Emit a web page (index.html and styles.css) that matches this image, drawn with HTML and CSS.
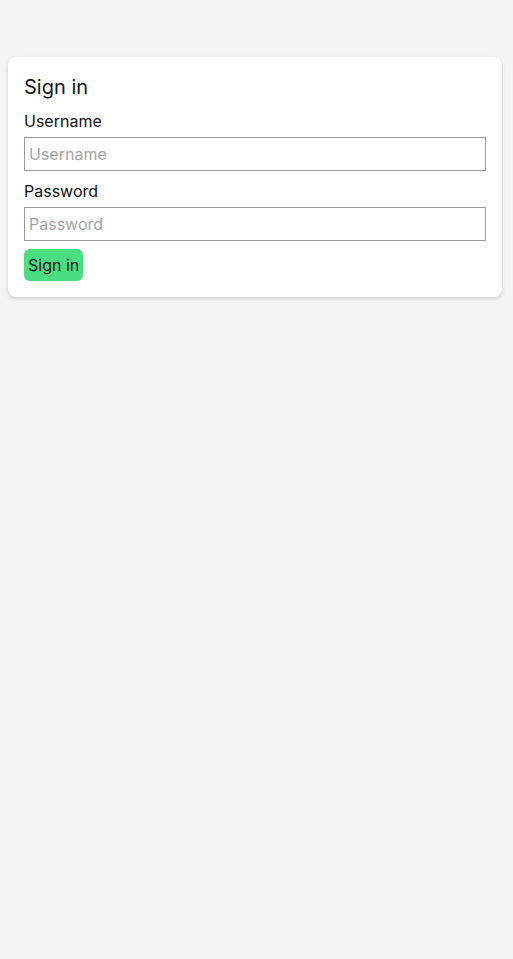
FILE: index.html
```html
<!DOCTYPE html>
<html lang="en">
<head>
    <meta charset="UTF-8">
    <meta name="viewport" content="width=device-width, initial-scale=1.0">
    <title>Sign in</title>
    <link rel="stylesheet" href="styles.css">
</head>
<body>
    <div class="page">
        <!-- Login card -->
        <form class="card" onsubmit="return false">
            <h2 class="title">Sign in</h2>
            <label class="label" for="username">Username</label>
            <input class="field" type="text" id="username" placeholder="Username">
            <label class="label" for="password">Password</label>
            <input class="field" type="password" id="password" placeholder="Password">
            <div>
                <button class="btn" type="submit">Sign in</button>
            </div>
        </form>
    </div>
</body>
</html>
```

FILE: styles.css
```css
body {
    margin: 0;
    background-color: #f4f4f4;
    font-family: Inter, "Noto Sans", sans-serif;
    color: #111;
}

.page {
    padding: 57px 11px 8px 8px;
}

.card {
    display: flex;
    flex-direction: column;
    background: white;
    padding: 16px;
    border-radius: 8px;
    box-shadow: 0 2px 4px rgba(0, 0, 0, 0.15);
}

.title {
    margin: 0 0 8px;
    font-size: 20px;
    font-weight: 400;
    line-height: 28px;
}

.label {
    font-size: 16px;
    line-height: 24px;
    margin-bottom: 4px;
}

.field {
    box-sizing: border-box;
    height: 34px;
    margin: 0 0 8px;
    padding: 0 4px;
    border: 1px solid #999;
    border-radius: 0;
    font-family: inherit;
    font-size: 16px;
    color: #111;
}

.field::placeholder {
    color: #a3a3a3;
}

.btn {
    height: 32px;
    padding: 0 4px;
    border: none;
    border-radius: 6px;
    background-color: #4ade80;
    color: #111;
    font-family: inherit;
    font-size: 16px;
    cursor: pointer;
}
```
